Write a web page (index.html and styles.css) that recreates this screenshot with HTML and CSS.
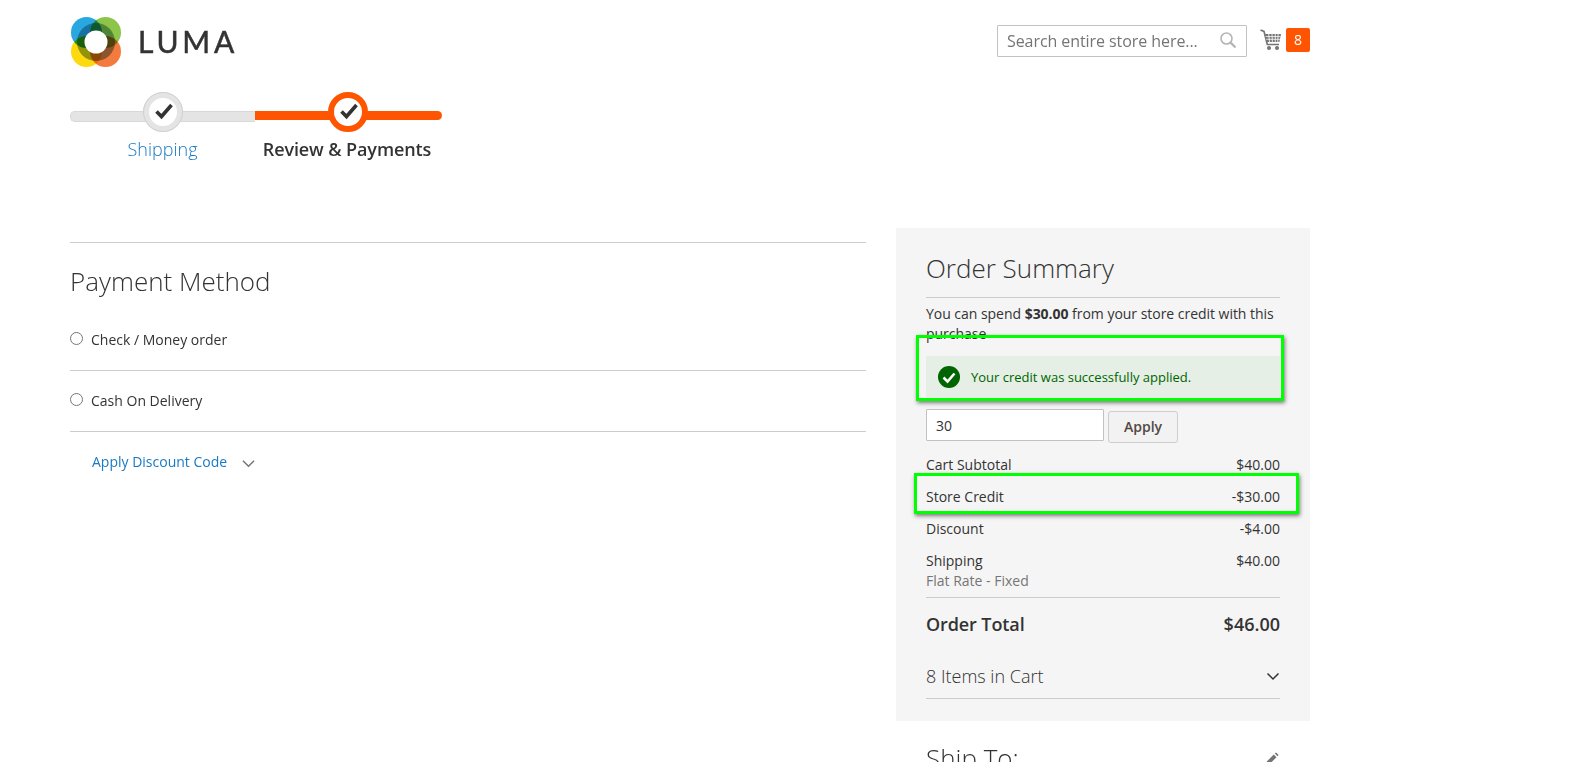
FILE: index.html
```html
<!DOCTYPE html>
<html lang="en">
<head>
<meta charset="utf-8">
<title>Checkout</title>
<link rel="stylesheet" href="styles.css">
</head>
<body>
<div class="page">
  <header class="header">
    <a class="logo" href="#">
      <svg class="logo-mark" width="52" height="52" viewBox="0 0 52 52">
        <g class="logo-circles">
          <circle cx="16.5" cy="16.5" r="15.5" fill="#29a8e0"/>
          <circle cx="35.5" cy="16.5" r="15.5" fill="#8dc44a"/>
          <circle cx="16.5" cy="35.5" r="15.5" fill="#fdd90f"/>
          <circle cx="35.5" cy="35.5" r="15.5" fill="#f47b3e"/>
          <circle cx="26" cy="26" r="19" fill="#93adb8"/>
        </g>
        <circle cx="26" cy="26" r="11.5" fill="#fff"/>
      </svg>
      <span class="logo-text">LUMA</span>
    </a>
    <div class="header-actions">
      <div class="search">
        <input class="search-input" type="text" placeholder="Search entire store here...">
        <svg class="search-icon" width="18" height="18" viewBox="0 0 18 18"><circle cx="7.5" cy="7.5" r="5.5" fill="none" stroke="#b5b5b5" stroke-width="1.6"/><path d="M11.6 11.6 16.5 16.5" stroke="#b5b5b5" stroke-width="2.2" fill="none"/></svg>
      </div>
      <svg class="cart-icon" width="21" height="22" viewBox="0 0 21 22"><path d="M0.5 1 4 2.4 7.3 15.5H19" fill="none" stroke="#757575" stroke-width="1.7"/><path d="M5 5H21L19.4 13H7Z" fill="#757575"/><path d="M8.7 5 9.5 13M12 5 12.4 13M15.3 5 15.2 13M18.2 5 17.7 13M5.6 7.6H20.5M6.3 10.3H20" stroke="#fff" stroke-width=".8" fill="none"/><circle cx="9" cy="19" r="2" fill="#757575"/><circle cx="17" cy="19" r="2" fill="#757575"/></svg>
      <span class="cart-badge">8</span>
    </div>
  </header>

  <ol class="progress">
    <li class="step step-done">
      <div class="step-track">
        <span class="step-dot">
          <svg class="step-check" width="20" height="18" viewBox="0 0 20 18"><path d="M2.5 9.5 7.5 14.5 17.5 3" fill="none" stroke="#333" stroke-width="3.6"/></svg>
        </span>
      </div>
      <span class="step-label">Shipping</span>
    </li>
    <li class="step step-active">
      <div class="step-track">
        <span class="step-dot">
          <svg class="step-check" width="20" height="18" viewBox="0 0 20 18"><path d="M2.5 9.5 7.5 14.5 17.5 3" fill="none" stroke="#333" stroke-width="3.6"/></svg>
        </span>
      </div>
      <span class="step-label">Review &amp; Payments</span>
    </li>
  </ol>

  <div class="columns">
    <main class="main">
      <section class="payment">
        <h2 class="title">Payment Method</h2>
        <label class="method method-first"><input class="radio" type="radio" name="pay"><span>Check / Money order</span></label>
        <label class="method"><input class="radio" type="radio" name="pay"><span>Cash On Delivery</span></label>
        <div class="discount">
          <a class="link" href="#">Apply Discount Code</a>
          <svg class="discount-chevron" width="14" height="9" viewBox="0 0 14 9"><path d="M1 1.5 7 7.5 13 1.5" fill="none" stroke="#757575" stroke-width="1.6"/></svg>
        </div>
      </section>
    </main>

    <aside class="side">
      <div class="summary">
        <h2 class="title summary-title">Order Summary</h2>
        <p class="credit-text">You can spend <strong>$30.00</strong> from your store credit with this purchase</p>
        <div class="message">
          <svg class="message-icon" width="22" height="22" viewBox="0 0 22 22"><circle cx="11" cy="11" r="11" fill="#006400"/><path d="M5.5 11.5 9.5 15.5 16.5 7.5" fill="none" stroke="#fff" stroke-width="2.6"/></svg>
          <span>Your credit was successfully applied.</span>
        </div>
        <div class="credit-form">
          <input class="credit-input" type="text" value="30">
          <button class="apply" type="button">Apply</button>
        </div>
        <div class="row"><span>Cart Subtotal</span><span>$40.00</span></div>
        <div class="row"><span>Store Credit</span><span>-$30.00</span></div>
        <div class="row"><span>Discount</span><span>-$4.00</span></div>
        <div class="row row-shipping"><span>Shipping<small class="row-note">Flat Rate - Fixed</small></span><span>$40.00</span></div>
        <div class="total"><span class="total-label">Order Total</span><span>$46.00</span></div>
        <div class="items">
          <span>8 Items in Cart</span>
          <svg width="14" height="9" viewBox="0 0 14 9"><path d="M1.5 1.5 7 7 12.5 1.5" fill="none" stroke="#333" stroke-width="1.5"/></svg>
        </div>
        <div class="annotation annotation-message"></div>
        <div class="annotation annotation-credit"></div>
      </div>
      <div class="ship-to">
        <h2 class="title">Ship To:</h2>
        <svg class="pencil" width="14" height="14" viewBox="0 0 14 14"><path d="M1 13 1.8 9.5 8.8 2.5 11.5 5.2 4.5 12.2ZM9.8 1.5 11 .4 13.6 3 12.5 4.2Z" fill="#757575"/></svg>
      </div>
    </aside>
  </div>
</div>
</body>
</html>
```
FILE: styles.css
```css
* { box-sizing: border-box; }
html, body { margin: 0; height: 100%; overflow: hidden; background: #fff; }
body { font-family: "Open Sans", "Liberation Sans", sans-serif; font-size: 14px; line-height: 20px; color: #333; }

.page { width: 1310px; padding-left: 70px; }

/* header */
.header { display: flex; height: 92px; padding-top: 16px; }
.logo { display: flex; align-items: center; height: 52px; text-decoration: none; color: #333; }
.logo-mark { display: block; }
.logo-circles { isolation: isolate; }
.logo-circles circle { mix-blend-mode: multiply; }
.logo-text { margin: -2px 0 0 16px; font-family: Lato, "Open Sans", sans-serif; font-size: 30px; line-height: 50px; letter-spacing: 3.8px; color: #333; -webkit-text-stroke: .5px #333; }
.header-actions { display: flex; align-items: flex-start; margin-left: auto; padding-top: 9px; }
.search { position: relative; width: 250px; height: 32px; }
.search-input { width: 100%; height: 100%; padding: 0 40px 0 9px; border: 1px solid #c2c2c2; border-radius: 1px; background: #fff; font: 16px/30px "Open Sans", sans-serif; letter-spacing: -.07px; color: #333; }
.search-input::placeholder { color: #757575; opacity: 1; }
.search-icon { position: absolute; top: 6px; right: 10px; }
.cart-icon { margin: 4px 0 0 13px; }
.cart-badge { width: 24px; height: 24px; margin: 3px 0 0 5px; border-radius: 2px; background: #ff5501; color: #fff; font-size: 14px; line-height: 24px; text-align: center; }

/* progress */
.progress { display: flex; margin: 0; padding: 0; list-style: none; }
.step { display: flex; flex-direction: column; align-items: center; width: 185px; }
.step-active { width: 187px; }
.step-track { position: relative; width: 100%; height: 40px; }
.step-track::before { content: ""; position: absolute; left: 0; right: 0; top: 19px; height: 9px; }
.step-done .step-track::before { background: #e4e4e4; border: 1px solid #d8d8d8; border-right: 0; border-radius: 5px 0 0 5px; }
.step-active .step-track::before { background: #ff5501; border-radius: 0 5px 5px 0; }
.step-dot { position: absolute; top: 0; left: 73px; display: flex; align-items: center; justify-content: center; width: 40px; height: 40px; border-radius: 50%; background: #fff; }
.step-done .step-dot { border: 6px solid #e4e4e4; outline: 1px solid #d0d0d0; outline-offset: -1px; }
.step-active .step-dot { border: 6px solid #ff5501; }
.step-check { margin: -2px 0 0 1px; }
.step-label { margin-top: 3px; font-size: 18px; line-height: 28px; }
.step-done .step-label { color: #1979c3; font-weight: 300; }
.step-active .step-label { margin-right: 3px; font-weight: 600; letter-spacing: -.1px; }

/* columns */
.columns { display: flex; justify-content: space-between; margin-top: 65px; }
.main { width: 796px; padding-top: 14px; }
.side { width: 414px; }
.title { margin: 0; font-size: 26px; font-weight: 300; line-height: 34px; color: #333; }

/* payment */
.payment { padding-top: 21px; border-top: 1px solid #ccc; }
.method { display: flex; align-items: flex-start; gap: 8px; padding: 20px 0; border-bottom: 1px solid #ccc; }
.method-first { padding-top: 32px; }
.radio { width: 13px; height: 13px; margin: 2px 0 0; accent-color: #757575; }
.discount { display: flex; align-items: center; gap: 15px; padding: 20px 0 0 22px; }
.link { color: #1979c3; text-decoration: none; }
.discount-chevron { width: 13px; margin-top: 3px; }

/* summary */
.summary { position: relative; padding: 23px 30px 22px; background: #f5f5f5; }
.summary-title { padding-bottom: 12px; border-bottom: 1px solid #ccc; }
.credit-text { margin: 6px 0 0; letter-spacing: -.03px; }
.credit-text strong { font-weight: 700; }
.message { display: flex; align-items: center; gap: 11px; height: 42px; margin: 12px 0 0; padding-left: 12px; background: #e5efe5; color: #006400; font-size: 13px; line-height: 20px; }
.credit-form { display: flex; align-items: flex-start; gap: 4px; height: 34px; margin: 11px 0 6px; }
.credit-input { width: 178px; height: 32px; padding: 0 9px; border: 1px solid #c2c2c2; border-radius: 1px; background: #fff; font: 14px/30px "Open Sans", sans-serif; color: #333; }
.apply { width: 70px; height: 32px; margin-top: 2px; padding: 0; border: 1px solid #cdcdcd; border-radius: 3px; background: #f2f2f2; font: 600 14px/18px "Open Sans", sans-serif; color: #514943; }
.row { display: flex; justify-content: space-between; padding: 6px 0; }
.row-note { display: block; font-size: 14px; color: #757575; }
.total { display: flex; justify-content: space-between; padding: 13px 0 0; border-top: 1px solid #ccc; font-size: 18px; font-weight: 600; line-height: 26px; }
.total-label { letter-spacing: -.1px; }
.items { display: flex; align-items: center; justify-content: space-between; padding: 26px 0 9px; border-bottom: 1px solid #ccc; font-size: 18px; font-weight: 300; line-height: 26px; }

/* reviewer annotations drawn over the page */
.annotation { position: absolute; border: 3px solid #0f0; box-shadow: 1px 2px 4px rgba(0, 0, 0, .5); }
.annotation-message { left: 20px; top: 107px; width: 368px; height: 66px; }
.annotation-credit { left: 18px; top: 245px; width: 385px; height: 41px; }

/* ship to */
.ship-to { display: flex; align-items: flex-start; justify-content: space-between; margin-top: 20px; padding: 0 31px 0 30px; }
.pencil { margin-top: 11px; }
```
